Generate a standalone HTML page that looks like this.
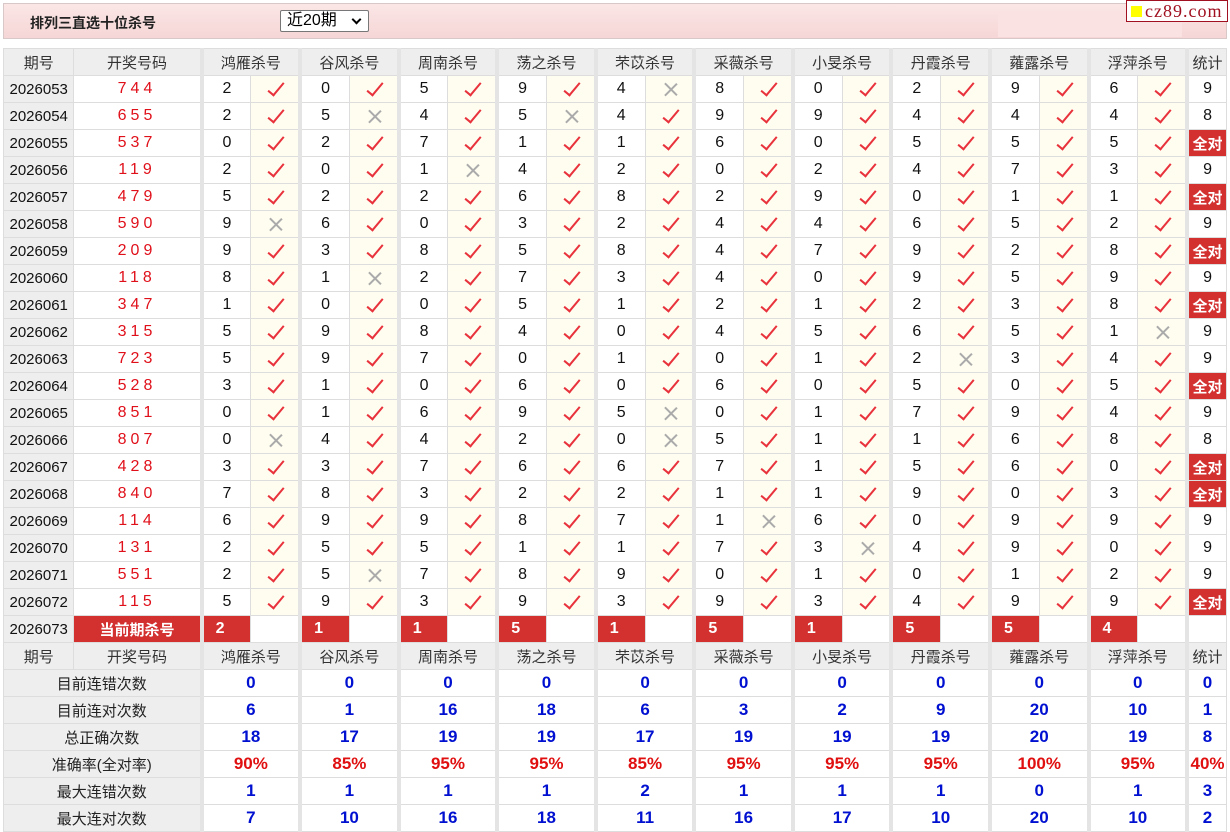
<!DOCTYPE html>
<html><head><meta charset="utf-8"><style>
body{margin:0;width:1230px;height:832px;background:#fff;font-family:"Liberation Sans","Noto Sans CJK SC",sans-serif;position:relative;overflow:hidden}
.bar{position:absolute;left:3px;top:3px;width:1222px;height:34px;border:1px solid #d8c8c8;background:linear-gradient(#fbe6e6,#f6d6d6)}
.bar .t{position:absolute;left:26px;top:9px;font-size:14px;font-weight:bold;color:#222}
.bar .sel{position:absolute;left:276px;top:6px;border:1px solid #777;background:#fff;border-radius:2px;font-size:16px;line-height:20px;padding-left:6px;box-sizing:border-box;width:89px;height:22px}
.bar .sel:after{content:"";position:absolute;right:8px;top:5px;width:5px;height:5px;border-right:2px solid #000;border-bottom:2px solid #000;transform:rotate(45deg)}
.bar .lt{position:absolute;left:994px;top:7px;width:184px;height:26px;background:#fae2e2}
.logo{position:absolute;left:1126px;top:0;width:100px;height:20px;border:1px solid #a01020;background:#fff;font-family:"Liberation Serif",serif;font-size:18px;color:#a01020;line-height:20px;letter-spacing:1px}
.logo i{display:inline-block;width:11px;height:11px;background:#ff0;margin:0 3px 0 4px}
table{position:absolute;left:3px;top:48px;border-collapse:collapse;table-layout:fixed;width:1224px}
td{height:26px;padding:0;border:1px solid #ddd;text-align:center;font-size:16px;color:#111;position:relative}
tr.d td:nth-child(2n+3),.h td.g,.s td.g{border-left:4px solid #e4e4e4}
.h td{background:#eee;font-size:15px;color:#333}
td.p{background:#eee;font-size:15px}
td.k{color:#e0101a;letter-spacing:4px;font-size:16px}
td.y,td.x{background:#fffdf0}
td.y:after{content:"";position:absolute;left:21px;top:3px;width:6px;height:15px;border-right:2px solid #e8323c;border-bottom:2px solid #e8323c;transform:rotate(40deg)}
td.x:before,td.x:after{content:"";position:absolute;left:24px;top:5px;width:1.5px;height:17px;background:#aaa;transform:rotate(45deg)}
td.x:after{transform:rotate(-45deg)}
td.q{background:#d33030;color:#fff;font-weight:bold;font-size:15px}
td.r{background:#d33030;color:#fff;font-weight:bold;text-align:left;padding-left:12px}
.s td{color:#0010d0;font-weight:bold;font-size:17px}
.s td.l{background:#eee;color:#222;font-weight:normal;font-size:15px}
.s.a td.g{color:#e01010}
</style></head><body>
<div class="bar"><span class="t">排列三直选十位杀号</span><div class="sel">近20期</div><div class="lt"></div></div>
<div class="logo"><i></i>cz89.com</div>
<table>
<colgroup><col style="width:70px"><col style="width:127px"><col span="20" style="width:49px"><col style="width:39px"></colgroup>
<tr class="h"><td>期号</td><td>开奖号码</td><td colspan="2" class="g">鸿雁杀号</td><td colspan="2" class="g">谷风杀号</td><td colspan="2" class="g">周南杀号</td><td colspan="2" class="g">荡之杀号</td><td colspan="2" class="g">芣苡杀号</td><td colspan="2" class="g">采薇杀号</td><td colspan="2" class="g">小旻杀号</td><td colspan="2" class="g">丹霞杀号</td><td colspan="2" class="g">蕹露杀号</td><td colspan="2" class="g">浮萍杀号</td><td class="g">统计</td></tr>
<tr class="d"><td class="p">2026053</td><td class="k">744</td><td>2</td><td class="y"></td><td>0</td><td class="y"></td><td>5</td><td class="y"></td><td>9</td><td class="y"></td><td>4</td><td class="x"></td><td>8</td><td class="y"></td><td>0</td><td class="y"></td><td>2</td><td class="y"></td><td>9</td><td class="y"></td><td>6</td><td class="y"></td><td>9</td></tr>
<tr class="d"><td class="p">2026054</td><td class="k">655</td><td>2</td><td class="y"></td><td>5</td><td class="x"></td><td>4</td><td class="y"></td><td>5</td><td class="x"></td><td>4</td><td class="y"></td><td>9</td><td class="y"></td><td>9</td><td class="y"></td><td>4</td><td class="y"></td><td>4</td><td class="y"></td><td>4</td><td class="y"></td><td>8</td></tr>
<tr class="d"><td class="p">2026055</td><td class="k">537</td><td>0</td><td class="y"></td><td>2</td><td class="y"></td><td>7</td><td class="y"></td><td>1</td><td class="y"></td><td>1</td><td class="y"></td><td>6</td><td class="y"></td><td>0</td><td class="y"></td><td>5</td><td class="y"></td><td>5</td><td class="y"></td><td>5</td><td class="y"></td><td class="q">全对</td></tr>
<tr class="d"><td class="p">2026056</td><td class="k">119</td><td>2</td><td class="y"></td><td>0</td><td class="y"></td><td>1</td><td class="x"></td><td>4</td><td class="y"></td><td>2</td><td class="y"></td><td>0</td><td class="y"></td><td>2</td><td class="y"></td><td>4</td><td class="y"></td><td>7</td><td class="y"></td><td>3</td><td class="y"></td><td>9</td></tr>
<tr class="d"><td class="p">2026057</td><td class="k">479</td><td>5</td><td class="y"></td><td>2</td><td class="y"></td><td>2</td><td class="y"></td><td>6</td><td class="y"></td><td>8</td><td class="y"></td><td>2</td><td class="y"></td><td>9</td><td class="y"></td><td>0</td><td class="y"></td><td>1</td><td class="y"></td><td>1</td><td class="y"></td><td class="q">全对</td></tr>
<tr class="d"><td class="p">2026058</td><td class="k">590</td><td>9</td><td class="x"></td><td>6</td><td class="y"></td><td>0</td><td class="y"></td><td>3</td><td class="y"></td><td>2</td><td class="y"></td><td>4</td><td class="y"></td><td>4</td><td class="y"></td><td>6</td><td class="y"></td><td>5</td><td class="y"></td><td>2</td><td class="y"></td><td>9</td></tr>
<tr class="d"><td class="p">2026059</td><td class="k">209</td><td>9</td><td class="y"></td><td>3</td><td class="y"></td><td>8</td><td class="y"></td><td>5</td><td class="y"></td><td>8</td><td class="y"></td><td>4</td><td class="y"></td><td>7</td><td class="y"></td><td>9</td><td class="y"></td><td>2</td><td class="y"></td><td>8</td><td class="y"></td><td class="q">全对</td></tr>
<tr class="d"><td class="p">2026060</td><td class="k">118</td><td>8</td><td class="y"></td><td>1</td><td class="x"></td><td>2</td><td class="y"></td><td>7</td><td class="y"></td><td>3</td><td class="y"></td><td>4</td><td class="y"></td><td>0</td><td class="y"></td><td>9</td><td class="y"></td><td>5</td><td class="y"></td><td>9</td><td class="y"></td><td>9</td></tr>
<tr class="d"><td class="p">2026061</td><td class="k">347</td><td>1</td><td class="y"></td><td>0</td><td class="y"></td><td>0</td><td class="y"></td><td>5</td><td class="y"></td><td>1</td><td class="y"></td><td>2</td><td class="y"></td><td>1</td><td class="y"></td><td>2</td><td class="y"></td><td>3</td><td class="y"></td><td>8</td><td class="y"></td><td class="q">全对</td></tr>
<tr class="d"><td class="p">2026062</td><td class="k">315</td><td>5</td><td class="y"></td><td>9</td><td class="y"></td><td>8</td><td class="y"></td><td>4</td><td class="y"></td><td>0</td><td class="y"></td><td>4</td><td class="y"></td><td>5</td><td class="y"></td><td>6</td><td class="y"></td><td>5</td><td class="y"></td><td>1</td><td class="x"></td><td>9</td></tr>
<tr class="d"><td class="p">2026063</td><td class="k">723</td><td>5</td><td class="y"></td><td>9</td><td class="y"></td><td>7</td><td class="y"></td><td>0</td><td class="y"></td><td>1</td><td class="y"></td><td>0</td><td class="y"></td><td>1</td><td class="y"></td><td>2</td><td class="x"></td><td>3</td><td class="y"></td><td>4</td><td class="y"></td><td>9</td></tr>
<tr class="d"><td class="p">2026064</td><td class="k">528</td><td>3</td><td class="y"></td><td>1</td><td class="y"></td><td>0</td><td class="y"></td><td>6</td><td class="y"></td><td>0</td><td class="y"></td><td>6</td><td class="y"></td><td>0</td><td class="y"></td><td>5</td><td class="y"></td><td>0</td><td class="y"></td><td>5</td><td class="y"></td><td class="q">全对</td></tr>
<tr class="d"><td class="p">2026065</td><td class="k">851</td><td>0</td><td class="y"></td><td>1</td><td class="y"></td><td>6</td><td class="y"></td><td>9</td><td class="y"></td><td>5</td><td class="x"></td><td>0</td><td class="y"></td><td>1</td><td class="y"></td><td>7</td><td class="y"></td><td>9</td><td class="y"></td><td>4</td><td class="y"></td><td>9</td></tr>
<tr class="d"><td class="p">2026066</td><td class="k">807</td><td>0</td><td class="x"></td><td>4</td><td class="y"></td><td>4</td><td class="y"></td><td>2</td><td class="y"></td><td>0</td><td class="x"></td><td>5</td><td class="y"></td><td>1</td><td class="y"></td><td>1</td><td class="y"></td><td>6</td><td class="y"></td><td>8</td><td class="y"></td><td>8</td></tr>
<tr class="d"><td class="p">2026067</td><td class="k">428</td><td>3</td><td class="y"></td><td>3</td><td class="y"></td><td>7</td><td class="y"></td><td>6</td><td class="y"></td><td>6</td><td class="y"></td><td>7</td><td class="y"></td><td>1</td><td class="y"></td><td>5</td><td class="y"></td><td>6</td><td class="y"></td><td>0</td><td class="y"></td><td class="q">全对</td></tr>
<tr class="d"><td class="p">2026068</td><td class="k">840</td><td>7</td><td class="y"></td><td>8</td><td class="y"></td><td>3</td><td class="y"></td><td>2</td><td class="y"></td><td>2</td><td class="y"></td><td>1</td><td class="y"></td><td>1</td><td class="y"></td><td>9</td><td class="y"></td><td>0</td><td class="y"></td><td>3</td><td class="y"></td><td class="q">全对</td></tr>
<tr class="d"><td class="p">2026069</td><td class="k">114</td><td>6</td><td class="y"></td><td>9</td><td class="y"></td><td>9</td><td class="y"></td><td>8</td><td class="y"></td><td>7</td><td class="y"></td><td>1</td><td class="x"></td><td>6</td><td class="y"></td><td>0</td><td class="y"></td><td>9</td><td class="y"></td><td>9</td><td class="y"></td><td>9</td></tr>
<tr class="d"><td class="p">2026070</td><td class="k">131</td><td>2</td><td class="y"></td><td>5</td><td class="y"></td><td>5</td><td class="y"></td><td>1</td><td class="y"></td><td>1</td><td class="y"></td><td>7</td><td class="y"></td><td>3</td><td class="x"></td><td>4</td><td class="y"></td><td>9</td><td class="y"></td><td>0</td><td class="y"></td><td>9</td></tr>
<tr class="d"><td class="p">2026071</td><td class="k">551</td><td>2</td><td class="y"></td><td>5</td><td class="x"></td><td>7</td><td class="y"></td><td>8</td><td class="y"></td><td>9</td><td class="y"></td><td>0</td><td class="y"></td><td>1</td><td class="y"></td><td>0</td><td class="y"></td><td>1</td><td class="y"></td><td>2</td><td class="y"></td><td>9</td></tr>
<tr class="d"><td class="p">2026072</td><td class="k">115</td><td>5</td><td class="y"></td><td>9</td><td class="y"></td><td>3</td><td class="y"></td><td>9</td><td class="y"></td><td>3</td><td class="y"></td><td>9</td><td class="y"></td><td>3</td><td class="y"></td><td>4</td><td class="y"></td><td>9</td><td class="y"></td><td>9</td><td class="y"></td><td class="q">全对</td></tr>
<tr class="d"><td class="p">2026073</td><td class="q">当前期杀号</td><td class="r">2</td><td></td><td class="r">1</td><td></td><td class="r">1</td><td></td><td class="r">5</td><td></td><td class="r">1</td><td></td><td class="r">5</td><td></td><td class="r">1</td><td></td><td class="r">5</td><td></td><td class="r">5</td><td></td><td class="r">4</td><td></td><td></td></tr>
<tr class="h"><td>期号</td><td>开奖号码</td><td colspan="2" class="g">鸿雁杀号</td><td colspan="2" class="g">谷风杀号</td><td colspan="2" class="g">周南杀号</td><td colspan="2" class="g">荡之杀号</td><td colspan="2" class="g">芣苡杀号</td><td colspan="2" class="g">采薇杀号</td><td colspan="2" class="g">小旻杀号</td><td colspan="2" class="g">丹霞杀号</td><td colspan="2" class="g">蕹露杀号</td><td colspan="2" class="g">浮萍杀号</td><td class="g">统计</td></tr>
<tr class="s"><td colspan="2" class="l">目前连错次数</td><td colspan="2" class="g">0</td><td colspan="2" class="g">0</td><td colspan="2" class="g">0</td><td colspan="2" class="g">0</td><td colspan="2" class="g">0</td><td colspan="2" class="g">0</td><td colspan="2" class="g">0</td><td colspan="2" class="g">0</td><td colspan="2" class="g">0</td><td colspan="2" class="g">0</td><td class="g">0</td></tr>
<tr class="s"><td colspan="2" class="l">目前连对次数</td><td colspan="2" class="g">6</td><td colspan="2" class="g">1</td><td colspan="2" class="g">16</td><td colspan="2" class="g">18</td><td colspan="2" class="g">6</td><td colspan="2" class="g">3</td><td colspan="2" class="g">2</td><td colspan="2" class="g">9</td><td colspan="2" class="g">20</td><td colspan="2" class="g">10</td><td class="g">1</td></tr>
<tr class="s"><td colspan="2" class="l">总正确次数</td><td colspan="2" class="g">18</td><td colspan="2" class="g">17</td><td colspan="2" class="g">19</td><td colspan="2" class="g">19</td><td colspan="2" class="g">17</td><td colspan="2" class="g">19</td><td colspan="2" class="g">19</td><td colspan="2" class="g">19</td><td colspan="2" class="g">20</td><td colspan="2" class="g">19</td><td class="g">8</td></tr>
<tr class="s a"><td colspan="2" class="l">准确率(全对率)</td><td colspan="2" class="g">90%</td><td colspan="2" class="g">85%</td><td colspan="2" class="g">95%</td><td colspan="2" class="g">95%</td><td colspan="2" class="g">85%</td><td colspan="2" class="g">95%</td><td colspan="2" class="g">95%</td><td colspan="2" class="g">95%</td><td colspan="2" class="g">100%</td><td colspan="2" class="g">95%</td><td class="g">40%</td></tr>
<tr class="s"><td colspan="2" class="l">最大连错次数</td><td colspan="2" class="g">1</td><td colspan="2" class="g">1</td><td colspan="2" class="g">1</td><td colspan="2" class="g">1</td><td colspan="2" class="g">2</td><td colspan="2" class="g">1</td><td colspan="2" class="g">1</td><td colspan="2" class="g">1</td><td colspan="2" class="g">0</td><td colspan="2" class="g">1</td><td class="g">3</td></tr>
<tr class="s"><td colspan="2" class="l">最大连对次数</td><td colspan="2" class="g">7</td><td colspan="2" class="g">10</td><td colspan="2" class="g">16</td><td colspan="2" class="g">18</td><td colspan="2" class="g">11</td><td colspan="2" class="g">16</td><td colspan="2" class="g">17</td><td colspan="2" class="g">10</td><td colspan="2" class="g">20</td><td colspan="2" class="g">10</td><td class="g">2</td></tr>
</table>
</body></html>
